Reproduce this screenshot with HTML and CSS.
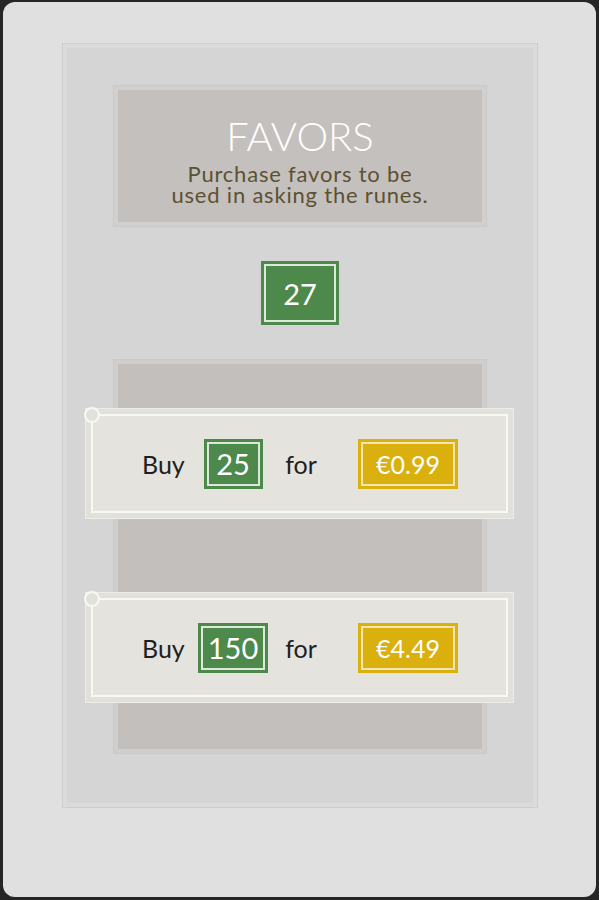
FILE: index.html
```html
<!DOCTYPE html>
<html lang="en">
<head>
<meta charset="utf-8">
<title>Favors</title>
<link rel="stylesheet" href="styles.css">
</head>
<body>
<div class="screen">
  <div class="panel">
    <div class="header">
      <h1 class="title">FAVORS</h1>
      <p class="subtitle">Purchase favors to be<br>used in asking the runes.</p>
    </div>
    <div class="counter"><span class="counter-value">27</span></div>
    <div class="shop">
      <div class="offer">
        <div class="offer-frame">
          <span class="corner"></span>
          <span class="word">Buy</span>
          <span class="qty"><span class="qty-value">25</span></span>
          <span class="word word-for">for</span>
          <span class="price"><span class="price-value">€0.99</span></span>
        </div>
      </div>
      <div class="offer offer-second">
        <div class="offer-frame">
          <span class="corner"></span>
          <span class="word">Buy</span>
          <span class="qty"><span class="qty-value">150</span></span>
          <span class="word word-for">for</span>
          <span class="price"><span class="price-value">€4.49</span></span>
        </div>
      </div>
    </div>
  </div>
</div>
</body>
</html>
```
FILE: styles.css
```css
html, body {
  margin: 0;
  padding: 0;
  background: #262626;
}
body {
  width: 599px;
  height: 900px;
  overflow: hidden;
  font-family: "Lato", "Open Sans", sans-serif;
}
.screen {
  box-sizing: border-box;
  width: 593px;
  height: 895px;
  margin: 2px 3px 3px 3px;
  border-radius: 12px;
  background: #e0e0e0;
  padding: 41px 0 0 59px;
}
.panel {
  box-sizing: border-box;
  width: 476px;
  height: 765px;
  background: #d6d5d5;
  border: 1px solid #cfcece;
  box-shadow: inset 0 0 0 4px #dcdbdb;
  padding: 41px 50px 0 50px;
  display: flex;
  flex-direction: column;
  align-items: center;
}
.header {
  box-sizing: border-box;
  width: 374px;
  height: 142px;
  background: #c4c0be;
  border: 1px solid #cbc8c7;
  box-shadow: inset 0 0 0 4px #d2d0cf;
  padding-top: 30px;
  text-align: center;
}
.title {
  margin: 0;
  font-size: 40px;
  line-height: 40px;
  font-weight: 300;
  color: #ffffff;
}
.subtitle {
  margin: 7px 0 0 0;
  font-size: 22px;
  line-height: 21px;
  letter-spacing: 0.8px;
  color: #5c5130;
}
.counter {
  margin-top: 34px;
  box-sizing: border-box;
  width: 78px;
  height: 64px;
  background: #4c894a;
  padding: 3px;
}
.counter-value {
  box-sizing: border-box;
  display: flex;
  align-items: center;
  justify-content: center;
  height: 100%;
  border: 2px solid #dce8da;
  color: #ffffff;
  font-size: 29px;
}
.shop {
  box-sizing: border-box;
  margin-top: 34px;
  width: 374px;
  height: 395px;
  background: #c3bfbd;
  border: 1px solid #cbc8c7;
  box-shadow: inset 0 0 0 4px #d0cecd;
  padding-top: 48px;
  display: flex;
  flex-direction: column;
}
.offer {
  box-sizing: border-box;
  height: 111px;
  margin: 0 -28px 0 -29px;
  padding: 5px;
  background: #e1e0da;
  border: 1px solid #eeede8;
}
.offer-second {
  margin-top: 73px;
}
.offer-frame {
  position: relative;
  box-sizing: border-box;
  height: 100%;
  border: 2px solid #f8f8f5;
  background: #e4e3dd;
  padding-left: 49px;
  display: grid;
  grid-template-columns: 51px 80px 56px 129px;
  align-items: center;
}
.corner {
  position: absolute;
  left: -9px;
  top: -9px;
  width: 12px;
  height: 12px;
  border: 2px solid #f8f8f5;
  border-radius: 50%;
  background: #e2e1db;
}
.word {
  font-size: 25px;
  color: #1f1f1f;
}
.word-for {
  text-align: center;
}
.qty {
  justify-self: center;
  box-sizing: border-box;
  height: 50px;
  padding: 3px;
  background: #4c894a;
}
.qty-value {
  box-sizing: border-box;
  display: flex;
  align-items: center;
  justify-content: center;
  height: 100%;
  min-width: 53px;
  padding: 0 5px;
  border: 2px solid #dce8da;
  color: #ffffff;
  font-size: 29px;
}
.price {
  justify-self: end;
  box-sizing: border-box;
  width: 100px;
  height: 50px;
  padding: 3px;
  background: #dab00f;
}
.price-value {
  box-sizing: border-box;
  display: flex;
  align-items: center;
  justify-content: center;
  height: 100%;
  border: 2px solid #f3e6b2;
  color: #ffffff;
  font-size: 25px;
}
```
